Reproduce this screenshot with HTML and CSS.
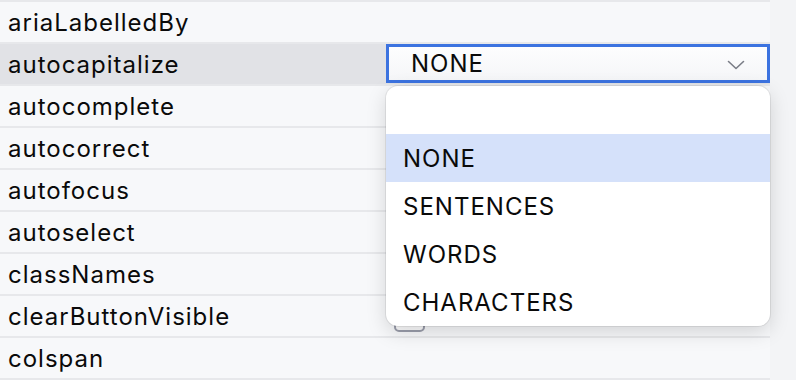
FILE: index.html
```
<!DOCTYPE html>
<html lang="en">
  <head>
    <meta charset="UTF-8" />
    <title>Properties</title>
    <link rel="stylesheet" href="styles.css">
  </head>
  <body>
    <div class="props">
      <div class="row"><div class="name">ariaLabelledBy</div><div class="value"></div></div>
      <div class="row active">
        <div class="name">autocapitalize</div>
        <div class="value">
          <div class="select">
            <span>NONE</span>
            <svg class="chevron" width="18" height="10" viewBox="0 0 18 10">
              <path d="M1.5 1.5 L9 8.5 L16.5 1.5" fill="none" stroke="#7a7d86" stroke-width="1.6" stroke-linecap="round" stroke-linejoin="round" />
            </svg>
          </div>
        </div>
      </div>
      <div class="row"><div class="name">autocomplete</div><div class="value"></div></div>
      <div class="row"><div class="name">autocorrect</div><div class="value"></div></div>
      <div class="row"><div class="name">autofocus</div><div class="value"></div></div>
      <div class="row"><div class="name">autoselect</div><div class="value"></div></div>
      <div class="row"><div class="name">classNames</div><div class="value"></div></div>
      <div class="row">
        <div class="name">clearButtonVisible</div>
        <div class="value"><span class="checkbox"></span></div>
      </div>
      <div class="row"><div class="name">colspan</div><div class="value"></div></div>

      <!-- open list of the autocapitalize select -->
      <ul class="dropdown">
        <li class="option"></li>
        <li class="option selected">NONE</li>
        <li class="option">SENTENCES</li>
        <li class="option">WORDS</li>
        <li class="option">CHARACTERS</li>
      </ul>
    </div>
  </body>
</html>
```

FILE: styles.css
```
body {
  margin: 0;
  padding: 0;
  font-family: Inter, "Noto Sans", sans-serif;
  font-size: 24px;
  letter-spacing: 1px;
  background: #f3f4f6;
  color: #0a0a0a;
}
.props {
  position: relative;
  width: 770px;
  border-top: 2px solid #e7e8eb;
}
.row {
  display: grid;
  grid-template-columns: 386px 1fr;
  height: 40px;
  border-bottom: 2px solid #e7e8eb;
  background: #f7f8fa;
}
.row.active {
  background: #e1e2e6;
}
.name {
  display: flex;
  align-items: center;
  padding-left: 8px;
}
.value {
  display: flex;
  align-items: center;
  padding-left: 8px;
}
.row.active .value {
  padding-left: 0;
  align-items: stretch;
}
.select {
  flex: 1;
  display: flex;
  align-items: center;
  justify-content: space-between;
  margin-bottom: 1px;
  padding: 0 22px 0 22px;
  border: 3px solid #3c73e0;
  background: linear-gradient(#fdfdfe, #f5f6f8);
}
.chevron {
  margin-top: 2px;
}
.checkbox {
  width: 27px;
  height: 27px;
  border: 2px solid #9a9dab;
  border-radius: 5px;
  background: #fbfbfc;
}
.dropdown {
  position: absolute;
  left: 386px;
  top: 84px;
  width: 384px;
  margin: 0;
  padding: 0;
  list-style: none;
  background: #fff;
  border-radius: 12px;
  overflow: hidden;
  box-shadow: 0 0 0 1px rgba(0, 0, 0, 0.07), 0 6px 20px rgba(0, 0, 0, 0.15);
}
.option {
  height: 48px;
  display: flex;
  align-items: center;
  padding-left: 17px;
}
.option.selected {
  background: #d5e1fa;
}
```
